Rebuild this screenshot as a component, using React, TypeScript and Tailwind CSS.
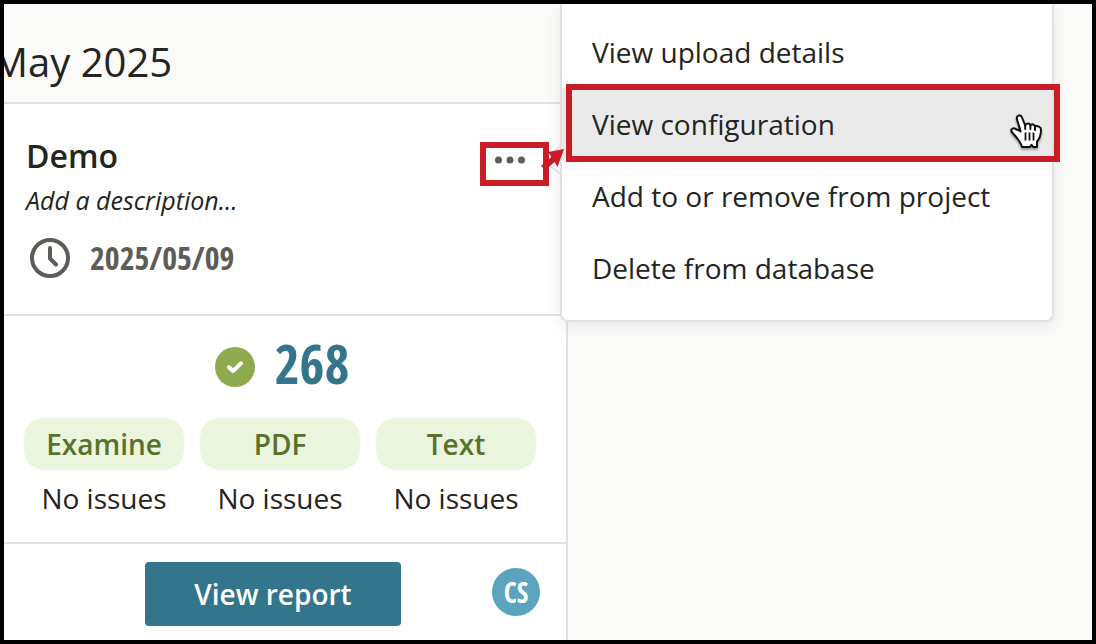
import type { ReactNode } from "react";

const checks = ["Examine", "PDF", "Text"];

const menuItems = [
  "View upload details",
  "View configuration",
  "Add to or remove from project",
  "Delete from database",
];

function ClockIcon() {
  return (
    <svg className="h-10 w-10 shrink-0" viewBox="0 0 40 40" fill="none" stroke="#5e5c56" strokeWidth="4">
      <circle cx="20" cy="20" r="18" />
      <path d="M20 10v10.500l6 6" strokeLinecap="round" strokeLinejoin="round" />
    </svg>
  );
}

function CheckIcon() {
  return (
    <svg className="h-10 w-10 shrink-0" viewBox="0 0 40 40">
      <circle cx="20" cy="20" r="20" fill="#8eaa4f" />
      <path
        d="M14 20.200l4 3.800 8-7.600"
        fill="none"
        stroke="#fff"
        strokeWidth="4"
        strokeLinecap="round"
        strokeLinejoin="round"
      />
    </svg>
  );
}

function HandCursor() {
  return (
    <svg className="h-9 w-8 drop-shadow-[0_2px_1px_rgba(0,0,0,0.35)]" viewBox="0 0 32 36">
      <path
        d="M10.500 18 7 6.500C5.800 2.500 10.600.8 12 4.500l3.200 8c.8-2.600 4.600-2.600 5.200 0 1.300-1.900 4.200-1.300 4.600 1 2.200-1 6 .2 6 3 0 5-.4 8-4 12V34H23l-1.500-2.200L20 34h-8c-.8-3.400-2.700-6-5-9L1.800 19c-1.800-2.800 1.600-4.900 4.100-2.800z"
        fill="#fff"
        stroke="#111"
        strokeWidth="2"
        strokeLinejoin="round"
      />
      <path
        d="M10.500 18.500 9.500 15M15.200 12.500v3.500M20.400 12.500v3.500M25 13.500v3.500"
        stroke="#111"
        strokeWidth="2"
        strokeLinecap="round"
      />
      <path d="M15.500 19.500v8M19.500 19.500v8M23.500 19.500v8" stroke="#111" strokeWidth="1.800" />
    </svg>
  );
}

function Condensed({ children, className }: { children: ReactNode; className: string }) {
  return (
    <span className={`font-['Open_Sans_Condensed','Liberation_Sans_Narrow',sans-serif] font-bold ${className}`}>
      {children}
    </span>
  );
}

export default function App() {
  return (
    <div className="relative flex min-h-screen flex-col overflow-hidden border-4 border-black bg-[#fafaf8] font-['Open_Sans',sans-serif] text-[28px] leading-10 text-[#242421]">
      {/* Month heading */}
      <header className="pt-8 pb-3.5">
        <h1 className="-ml-3 text-[40px] leading-[52px]">May 2025</h1>
      </header>

      {/* Upload card */}
      <article className="flex w-full max-w-[564px] grow flex-col border-t-2 border-r-2 border-[#e1e1e1] bg-white">
        <section className="flex items-start justify-between border-b-2 border-[#e1e1e1] pt-8 pr-[17px] pb-9 pl-[22px]">
          <div>
            <h2 className="text-[32px] font-semibold">Demo</h2>
            <p className="mt-1 text-[25px] italic">Add a description...</p>
            <div className="mt-[18px] flex items-center gap-5 pl-1">
              <ClockIcon />
              <Condensed className="text-[32px] text-[#5e5c56]">2025/05/09</Condensed>
            </div>
          </div>
          <button
            type="button"
            aria-label="More actions"
            className="mt-1.5 flex h-11 w-[69px] border-6 border-[#c91c26] pt-2 pl-[9px]"
          >
            <svg className="h-2 w-[31px]" viewBox="0 0 31 8" fill="#5e5c56">
              <circle cx="3.500" cy="4" r="3.500" />
              <circle cx="15" cy="4" r="3.500" />
              <circle cx="26.500" cy="4" r="3.500" />
            </svg>
          </button>
        </section>

        {/* Totals */}
        <section className="border-b-2 border-[#e1e1e1] px-5 pt-5 pb-6">
          <div className="flex items-start justify-center gap-5 pr-1.5">
            <div className="pt-[11px]">
              <CheckIcon />
            </div>
            <Condensed className="text-[54px] leading-[54px] text-[#33758a]">268</Condensed>
          </div>
          <ul className="mt-7 grid grid-cols-3 gap-4 pr-2.5 text-center">
            {checks.map((check) => (
              <li key={check}>
                <div className="rounded-[20px] bg-[#ebf4dc] py-1.5 font-semibold text-[#58722c]">{check}</div>
                <p className="mt-2">No issues</p>
              </li>
            ))}
          </ul>
        </section>

        <footer className="flex items-start justify-between pt-[18px] pr-[26px] pl-[141px]">
          <button
            type="button"
            className="h-16 w-64 rounded bg-[#33758a] font-semibold text-white"
          >
            View report
          </button>
          <div className="mt-1.5 flex h-12 w-12 items-center justify-center rounded-full bg-[#5aa5bd]">
            <Condensed className="text-[28px] text-white">CS</Condensed>
          </div>
        </footer>
      </article>

      {/* Actions menu */}
      <div className="absolute top-0 right-[38px] left-[556px] rounded-b-lg border-2 border-t-0 border-[#e1e1e1] bg-white pt-3 pb-4 shadow-[0_4px_16px_rgba(0,0,0,0.08)]">
        <ul>
          {menuItems.map((item) => (
            <li key={item} className="relative">
              <button
                type="button"
                className={`w-full px-[30px] py-4 text-left ${item === "View configuration" ? "bg-[#eaeaea]" : ""}`}
              >
                {item}
              </button>
              {item === "View configuration" && (
                <div className="absolute -top-1 -right-2 -bottom-0.5 left-1 flex items-center justify-end border-6 border-[#c91c26] pt-4 pr-3">
                  <HandCursor />
                </div>
              )}
            </li>
          ))}
        </ul>
      </div>

      {/* Pointer from the dots button to the menu */}
      <svg className="absolute top-[134px] left-[532px] h-11 w-9" viewBox="0 0 36 44" fill="none">
        <path d="M26 7 13 17M13 27l13 10" stroke="#e1e1e1" strokeWidth="2" />
        <path d="M7 30 20 19" stroke="#c91c26" strokeWidth="6" />
        <path d="M28 11 21.500 29l-4-7-5.500-8z" fill="#c91c26" />
      </svg>
    </div>
  );
}
